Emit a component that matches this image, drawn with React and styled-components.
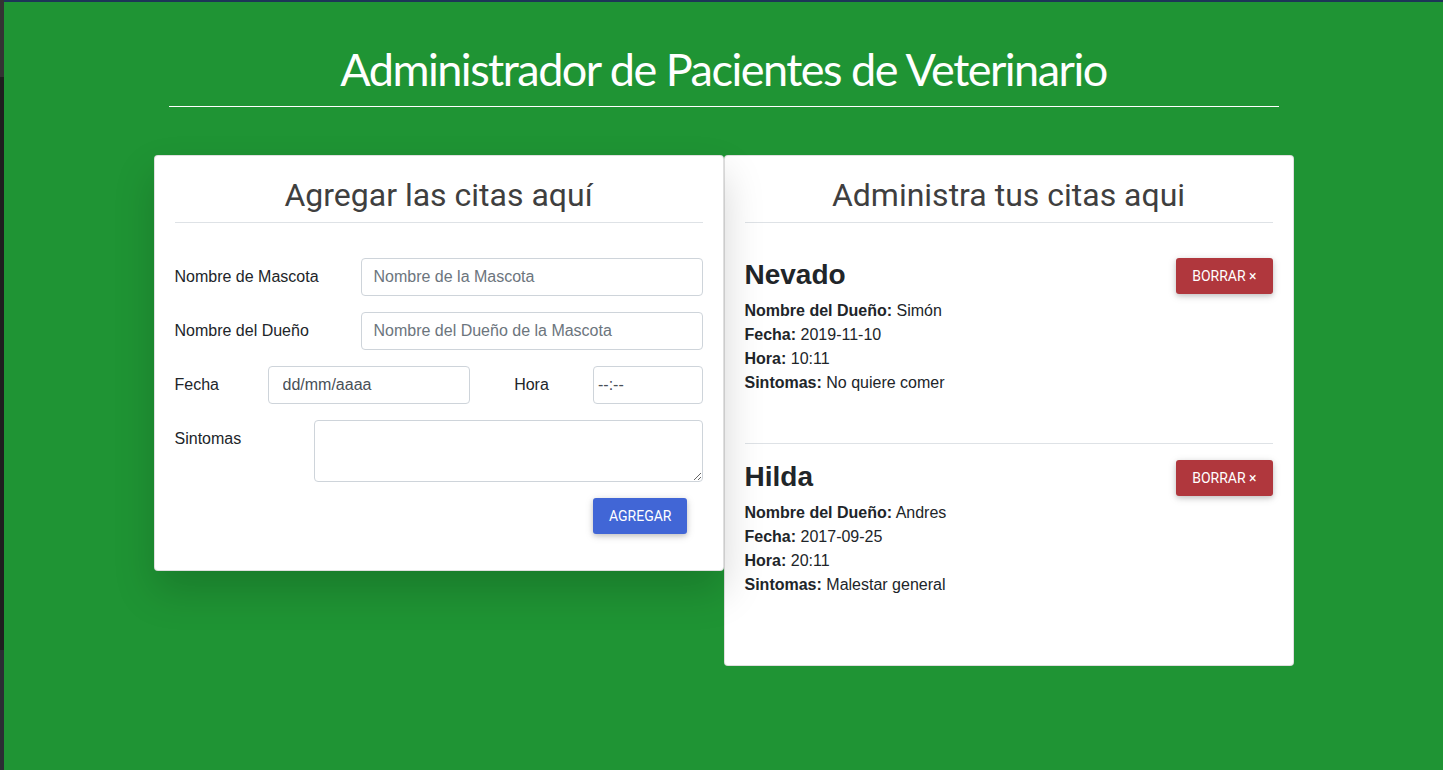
import React from 'react';
import styled, { createGlobalStyle, css } from 'styled-components';

const green = `#1f9434`;
const textColor = `#212529`;
const titleGray = `#3f3f3f`;
const lineGray = `#dee2e6`;

const GlobalStyle = createGlobalStyle`
    html, body {
        margin: 0;
        padding: 0;
    }
    body {
        font-family: "Liberation Sans", Arial, sans-serif;
        font-size: 16px;
        line-height: 1.5;
        color: ${textColor};
    }
    *, *::before, *::after {
        box-sizing: border-box;
    }
`;

const Shell = styled.div`
    display: flex;
    min-height: 100vh;
`;

// franja oscura del editor a la izquierda
const SideStrip = styled.div`
    flex: 0 0 4px;
    background: linear-gradient(#333333 0 77px, #1e1e1e 77px 650px, #2a2e33 650px);
`;

const Page = styled.main`
    flex: 1;
    background-color: ${green};
    border-top: 2px solid #1d3557;
`;

const Container = styled.div`
    max-width: 1140px;
    margin: 0 auto;
`;

const Title = styled.h1`
    margin: 40px 15px 48px;
    padding-bottom: 10px;
    border-bottom: 1px solid white;
    text-align: center;
    color: white;
    font-family: Lato, "Open Sans", sans-serif;
    font-weight: 400;
    font-size: 45px;
    letter-spacing: -1.5px;
    line-height: 1.2;
`;

const Columns = styled.div`
    display: grid;
    grid-template-columns: 1fr 1fr;
    align-items: start;
`;

const Card = styled.section`
    background: white;
    border: 1px solid rgba(0, 0, 0, 0.125);
    border-radius: 4px;
    padding: 20px;
    ${props => props.$raised && css`
        box-shadow: 0 20px 40px rgba(0, 0, 0, 0.17);
        position: relative;
    `}
`;

const CardTitle = styled.h2`
    margin: 0 0 ${props => props.$gap || 20}px;
    padding-bottom: 8px;
    border-bottom: 1px solid ${lineGray};
    text-align: center;
    font-family: Roboto, sans-serif;
    font-weight: 400;
    font-size: 32px;
    line-height: 1.2;
    color: ${titleGray};
`;

const Form = styled.form`
    padding-top: 15px;
`;

const Row = styled.div`
    display: flex;
    margin: 0 -15px 16px;
    justify-content: ${props => props.$justify || 'flex-start'};
`;

const Col = styled.div`
    flex: 0 0 ${props => (props.$span / 12) * 100}%;
    max-width: ${props => (props.$span / 12) * 100}%;
    padding: 0 15px;
    text-align: ${props => props.$align || 'left'};
`;

const Label = styled.label`
    display: block;
    padding: 7px 0;
    line-height: 1.5;
`;

const fieldStyles = css`
    display: block;
    width: 100%;
    padding: 6px 12px;
    border: 1px solid #ced4da;
    border-radius: 4px;
    font-family: "Liberation Sans", Arial, sans-serif;
    font-size: 16px;
    line-height: 1.5;
    color: #495057;
    background: white;
    &::placeholder {
        color: #6c757d;
        opacity: 1;
    }
`;

const Input = styled.input`
    ${fieldStyles};
    height: 38px;
    ${props => props.$picker && css`
        padding-left: ${props.$picker}px;
        &::placeholder {
            color: #495057;
        }
    `}
`;

const TextArea = styled.textarea`
    ${fieldStyles};
    height: 62px;
    resize: vertical;
`;

const Button = styled.button`
    border: 0;
    border-radius: 3px;
    padding: 9px 16px;
    font-family: Roboto, sans-serif;
    font-size: 14px;
    line-height: 18px;
    text-transform: uppercase;
    color: white;
    background-color: ${props => props.$color};
    box-shadow: 0 2px 5px 0 rgba(0, 0, 0, 0.16), 0 2px 10px 0 rgba(0, 0, 0, 0.12);
    cursor: pointer;
`;

const Appointment = styled.article`
    padding-top: 16px;
    &:not(:last-child) {
        border-bottom: 1px solid ${lineGray};
    }
`;

const AppointmentHead = styled.div`
    display: flex;
    justify-content: space-between;
    align-items: flex-start;
`;

const PetName = styled.h3`
    margin: 0 0 7px;
    font-size: 28px;
    font-weight: 700;
    line-height: 1.2;
`;

const Details = styled.div`
    margin-bottom: 48px;
`;

const Line = styled.p`
    margin: 0;
    line-height: 24px;
`;

const citas = [
    { mascota: 'Nevado', dueno: 'Simón', fecha: '2019-11-10', hora: '10:11', sintomas: 'No quiere comer' },
    { mascota: 'Hilda', dueno: 'Andres', fecha: '2017-09-25', hora: '20:11', sintomas: 'Malestar general' },
];

function NuevaCita() {
    return (
        <Card $raised>
            <CardTitle>Agregar las citas aquí</CardTitle>
            <Form onSubmit={e => e.preventDefault()}>
                <Row>
                    <Col $span={4}><Label>Nombre de Mascota</Label></Col>
                    <Col $span={8}><Input type="text" placeholder="Nombre de la Mascota" /></Col>
                </Row>
                <Row>
                    <Col $span={4}><Label>Nombre del Dueño</Label></Col>
                    <Col $span={8}><Input type="text" placeholder="Nombre del Dueño de la Mascota" /></Col>
                </Row>
                <Row>
                    <Col $span={2}><Label>Fecha</Label></Col>
                    <Col $span={5}><Input type="text" $picker={14} placeholder="dd/mm/aaaa" /></Col>
                    <Col $span={2} $align="center"><Label>Hora</Label></Col>
                    <Col $span={3}><Input type="text" $picker={4} placeholder="--:--" /></Col>
                </Row>
                <Row>
                    <Col $span={3}><Label>Sintomas</Label></Col>
                    <Col $span={9}><TextArea /></Col>
                </Row>
                <Row $justify="flex-end">
                    <Col $span={3}><Button type="submit" $color="#4166d6">Agregar</Button></Col>
                </Row>
            </Form>
        </Card>
    );
}

function ListaCitas() {
    return (
        <Card>
            <CardTitle $gap={19}>Administra tus citas aqui</CardTitle>
            {citas.map(cita => (
                <Appointment key={cita.mascota}>
                    <AppointmentHead>
                        <PetName>{cita.mascota}</PetName>
                        <Button type="button" $color="#b0373d">Borrar &times;</Button>
                    </AppointmentHead>
                    <Details>
                        <Line><b>Nombre del Dueño:</b> {cita.dueno}</Line>
                        <Line><b>Fecha:</b> {cita.fecha}</Line>
                        <Line><b>Hora:</b> {cita.hora}</Line>
                        <Line><b>Sintomas:</b> {cita.sintomas}</Line>
                    </Details>
                </Appointment>
            ))}
        </Card>
    );
}

export default function App() {
    return (
        <>
            <GlobalStyle />
            <Shell>
                <SideStrip />
                <Page>
                    <Container>
                        <Title>Administrador de Pacientes de Veterinario</Title>
                        <Columns>
                            <NuevaCita />
                            <ListaCitas />
                        </Columns>
                    </Container>
                </Page>
            </Shell>
        </>
    );
}
